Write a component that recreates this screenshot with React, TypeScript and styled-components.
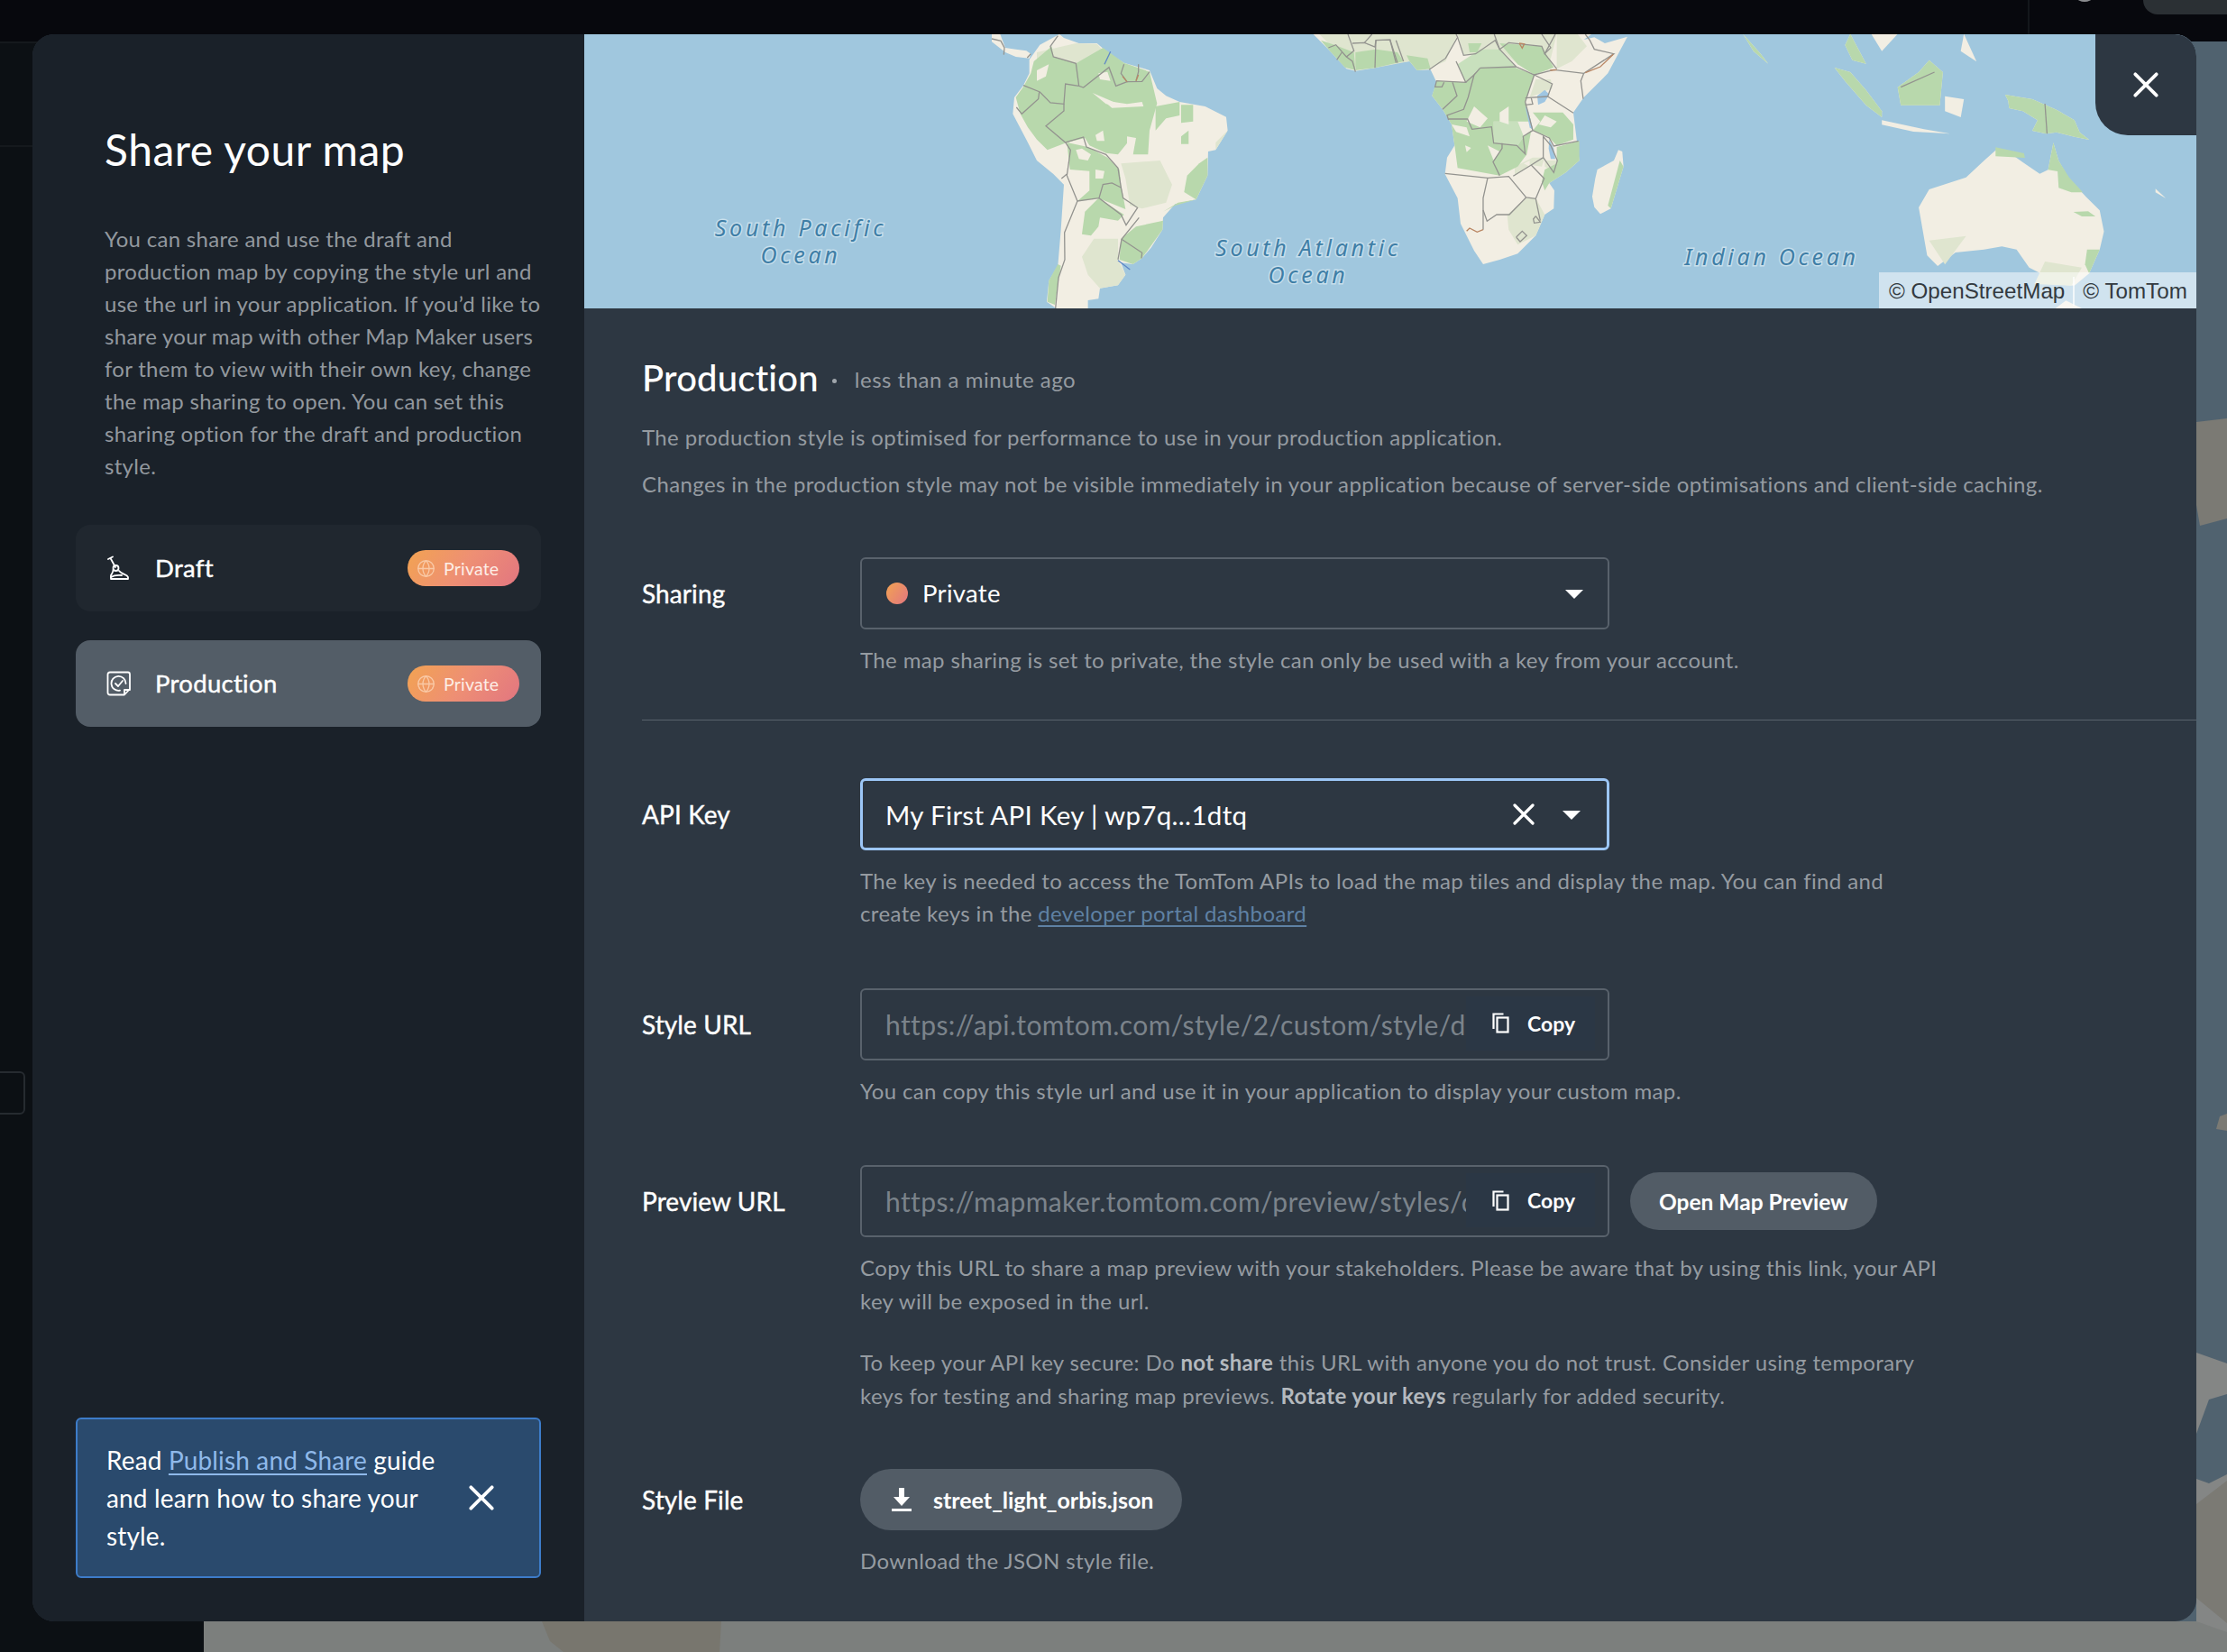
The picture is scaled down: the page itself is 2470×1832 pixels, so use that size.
import React from 'react';
import styled, { createGlobalStyle } from 'styled-components';
import { Globe } from 'lucide-react';

const GlobalStyle = createGlobalStyle`
  html, body {
    margin: 0;
    padding: 0;
    background: #0c1014;
    font-family: 'Lato', 'Noto Sans', sans-serif;
  }
  * { box-sizing: border-box; }
`;

const Page = styled.div`
  position: relative;
  width: 2470px;
  height: 1832px;
  overflow: hidden;
  display: flex;
  flex-direction: column;
`;

// dimmed app behind the modal
const TopBar = styled.div`
  height: 46px;
  background: #07080d;
  position: relative;
  flex: none;
`;

const TopDivider = styled.div`
  position: absolute;
  left: 2249px;
  top: 0;
  width: 2px;
  height: 44px;
  background: #14171b;
`;

const TopDot = styled.div`
  position: absolute;
  left: 2304px;
  top: -6px;
  width: 16px;
  height: 8px;
  border-radius: 50%;
  background: #8b8d90;
`;

const TopPill = styled.div`
  position: absolute;
  left: 2377px;
  top: 0;
  right: 0;
  height: 16px;
  background: #2b3034;
  border-bottom-left-radius: 18px;
`;

const BackRow = styled.div`
  flex: 1;
  display: flex;
  min-height: 0;
`;

const BackRail = styled.div`
  width: 226px;
  position: relative;
  background: #0c1014;
  border-top: 2px solid #15191d;
`;

const RailLine = styled.div`
  position: absolute;
  left: 0;
  right: 0;
  top: 113px;
  height: 2px;
  background: #15191d;
`;

const RailBox = styled.div`
  position: absolute;
  left: -6px;
  top: 1140px;
  width: 34px;
  height: 48px;
  border: 2px solid #262b30;
  border-radius: 6px;
`;

const BackMap = styled.svg`
  flex: 1;
  display: block;
  background: #50626f;
`;

const Modal = styled.div`
  position: absolute;
  left: 36px;
  top: 38px;
  width: 2400px;
  height: 1760px;
  display: flex;
  border-radius: 24px;
  overflow: hidden;
  background: #2d3742;
`;

const Sidebar = styled.aside`
  width: 612px;
  flex: none;
  background: #1a2129;
  padding: 100px 48px 48px;
  display: flex;
  flex-direction: column;
`;

const SideTitle = styled.h1`
  margin: 0 0 53px 32px;
  font-size: 48px;
  line-height: 56px;
  font-weight: 400;
  color: #ffffff;
  letter-spacing: 0.5px;
`;

const SideText = styled.p`
  margin: 0 0 47px 32px;
  font-size: 24px;
  line-height: 36px;
  color: #92989e;
  white-space: nowrap;
  letter-spacing: 0.3px;
`;

const Stages = styled.div`
  display: flex;
  flex-direction: column;
  gap: 32px;
`;

const StageCard = styled.div<{ $active?: boolean }>`
  height: 96px;
  border-radius: 16px;
  background: ${(p) => (p.$active ? '#535d67' : '#20272f')};
  display: flex;
  align-items: center;
  padding: 0 24px 0 34px;
`;

const StageIcon = styled.svg`
  width: 28px;
  height: 28px;
  flex: none;
  fill: none;
  stroke: #ffffff;
  stroke-width: 1.8;
  stroke-linecap: round;
  stroke-linejoin: round;
`;

const StageName = styled.span`
  margin: -2px 0 0 26px;
  flex: 1;
  font-size: 27.5px;
  color: #ffffff;
  letter-spacing: 0.3px;
  -webkit-text-stroke: 0.4px #ffffff;
`;

const Badge = styled.span`
  width: 124px;
  height: 40px;
  border-radius: 20px;
  background: linear-gradient(125deg, #f2a352 0%, #ee8f74 50%, #e27680 100%);
  display: flex;
  align-items: center;
  padding-left: 10px;
  gap: 9px;
  font-size: 19.5px;
  color: #fdeee6;
  letter-spacing: 0.2px;
  svg {
    width: 21px;
    height: 21px;
    color: #f9c9a6;
    flex: none;
  }
`;

const InfoBox = styled.div`
  margin-top: auto;
  height: 178px;
  background: #2a4a6d;
  border: 2px solid #3d7cc9;
  border-radius: 6px;
  display: flex;
  align-items: center;
  padding: 0 50px 0 32px;
`;

const InfoText = styled.p`
  margin: 0;
  flex: 1;
  font-size: 28px;
  line-height: 42px;
  color: #ffffff;
  white-space: nowrap;
  letter-spacing: 0.15px;
`;

const InfoLink = styled.a`
  color: #8fb9ea;
  text-decoration: underline;
  text-underline-offset: 4px;
`;

const CloseMark = styled.svg<{ $size: number }>`
  width: ${(p) => p.$size}px;
  height: ${(p) => p.$size}px;
  flex: none;
  stroke: #ffffff;
  stroke-width: 3.2;
  stroke-linecap: round;
  fill: none;
`;

const Main = styled.main`
  flex: 1;
  min-width: 0;
  display: flex;
  flex-direction: column;
`;

const MapBox = styled.div`
  position: relative;
  height: 304px;
  flex: none;
  overflow: hidden;
  background: #a0c7de;
`;

const MapSvg = styled.svg`
  display: block;
  width: 1788px;
  height: 304px;
  polyline {
    fill: none;
    stroke-width: 1.3px;
    vector-effect: non-scaling-stroke;
  }
`;

const MapLabel = styled.text`
  font-family: 'Noto Sans', sans-serif;
  font-style: italic;
  font-size: 25px;
  letter-spacing: 3.7px;
  text-anchor: middle;
  fill: #3f7ea6;
  stroke: #c7dfec;
  stroke-width: 3px;
  paint-order: stroke;
`;

const Attribution = styled.div`
  position: absolute;
  right: 0;
  bottom: 0;
  height: 40px;
  width: 352px;
  background: rgba(255, 255, 255, 0.5);
  display: flex;
  align-items: center;
  gap: 9px;
  padding: 1px 0 0 11px;
  font-family: 'Liberation Sans', sans-serif;
  font-size: 24.2px;
  color: #333a40;
  white-space: nowrap;
`;

const AttributionPart = styled.span`
  border-left: 2px solid rgba(255, 255, 255, 0.7);
  padding-left: 9px;
  line-height: 32px;
`;

const CloseTab = styled.button`
  position: absolute;
  top: 0;
  right: 0;
  width: 112px;
  height: 112px;
  border: 0;
  padding: 0;
  background: #2d3742;
  border-bottom-left-radius: 36px;
  display: flex;
  align-items: center;
  justify-content: center;
`;

const Content = styled.div`
  flex: 1;
  padding: 53px 0 0 64px;
`;

const Heading = styled.div`
  display: flex;
  align-items: center;
  height: 48px;
  margin-bottom: 24px;
`;

const HeadingTitle = styled.h2`
  margin: 0;
  font-size: 40px;
  font-weight: 500;
  color: #ffffff;
  letter-spacing: 0.2px;
`;

const HeadingDot = styled.span`
  width: 5px;
  height: 5px;
  margin: 6px 20px 0 15px;
  border-radius: 50%;
  background: #a0a6ac;
`;

const HeadingTime = styled.span`
  font-size: 24px;
  margin-top: 3px;
  color: #959ba1;
  letter-spacing: 0.5px;
`;

const Lead = styled.p<{ $last?: boolean }>`
  margin: 0 0 ${(p) => (p.$last ? 63 : 16)}px;
  font-size: 24px;
  line-height: 36px;
  color: #959ba1;
  letter-spacing: 0.37px;
  white-space: nowrap;
`;

const Section = styled.section<{ $gap?: number }>`
  display: grid;
  grid-template-columns: 242px 1fr;
  row-gap: 16px;
  align-items: center;
  margin-bottom: ${(p) => p.$gap ?? 64}px;
`;

const FieldLabel = styled.label`
  font-size: 28px;
  color: #ffffff;
  letter-spacing: 0.1px;
  -webkit-text-stroke: 0.4px #ffffff;
`;

const FieldRow = styled.div`
  display: flex;
  align-items: center;
  gap: 23px;
`;

const Box = styled.div<{ $focus?: boolean }>`
  width: 831px;
  height: 80px;
  flex: none;
  border: ${(p) => (p.$focus ? '3px solid #9cc6f6' : '2px solid #59626c')};
  border-radius: 6px;
  display: flex;
  align-items: center;
  padding-left: ${(p) => (p.$focus ? 25 : 26)}px;
  overflow: hidden;
  position: relative;
`;

const StatusDot = styled.span`
  width: 24px;
  height: 24px;
  border-radius: 50%;
  background: linear-gradient(125deg, #f2a352, #e27680);
  margin: 0 16px 0 1px;
  flex: none;
`;

const BoxValue = styled.span<{ $large?: boolean }>`
  flex: 1;
  font-size: ${(p) => (p.$large ? 29.5 : 27.5)}px;
  margin-top: ${(p) => (p.$large ? 2 : -2)}px;
  color: #ffffff;
  white-space: nowrap;
  letter-spacing: 0.32px;
`;

const Caret = styled.span<{ $right: number }>`
  width: 0;
  height: 0;
  margin-right: ${(p) => p.$right}px;
  margin-top: 2px;
  flex: none;
  border-left: 10px solid transparent;
  border-right: 10px solid transparent;
  border-top: 10px solid #ffffff;
`;

const ClearBtn = styled.span`
  display: flex;
  margin-right: 31px;
`;

const UrlText = styled.span`
  flex: 1;
  min-width: 0;
  overflow: hidden;
  font-size: 30px;
  color: #7b838b;
  white-space: nowrap;
  letter-spacing: 0.4px;
`;

const CopyBtn = styled.span`
  width: 143px;
  height: 60px;
  margin-right: 14px;
  margin-top: -2px;
  flex: none;
  display: flex;
  align-items: center;
  gap: 19px;
  padding-left: 29px;
  background: #2b3745;
  font-size: 23px;
  font-weight: 700;
  color: #ffffff;
`;

const CopyIcon = styled.svg`
  width: 20px;
  height: 23px;
  flex: none;
  fill: none;
  stroke: #ffffff;
  stroke-width: 2.2;
`;

const Help = styled.p<{ $tight?: boolean }>`
  grid-column: 2;
  margin: 0 0 ${(p) => (p.$tight ? 32 : 0)}px;
  font-size: 24px;
  line-height: 36.5px;
  color: #959ba1;
  white-space: nowrap;
  letter-spacing: 0.37px;
  b {
    color: #b4b9be;
    font-weight: 700;
  }
`;

const HelpLink = styled.a`
  color: #5f81a4;
  text-decoration: underline;
  text-underline-offset: 4px;
`;

const HelpStack = styled.div`
  grid-column: 2;
  display: flex;
  flex-direction: column;
`;

const Divider = styled.hr`
  margin: 47px 0 64px;
  border: 0;
  height: 1px;
  background: #59626c;
`;

const PillButton = styled.button`
  height: 64px;
  padding: 0 32px;
  border: 0;
  border-radius: 32px;
  background: #525c66;
  font-family: inherit;
  font-size: 24.5px;
  font-weight: 700;
  color: #ffffff;
  white-space: nowrap;
`;

const FileButton = styled(PillButton)`
  height: 68px;
  width: 357px;
  border-radius: 34px;
  padding: 0 0 0 35px;
  font-size: 25px;
  display: flex;
  align-items: center;
  gap: 24px;
`;

const DownloadIcon = styled.svg`
  width: 22px;
  height: 26px;
  flex: none;
  fill: #ffffff;
`;

const LAND = '#f2eee3';
const MID = '#dfe5cf';
const FOREST = '#b8d8ac';
const LIGHT_FOREST = '#c8e0bd';
const BORDER = '#93938f';
const ORANGE = '#b98663';
const LAKE = '#9fc6e2';

const Shapes = ({ fill, items }: { fill: string; items: string[] }) => (
  <>
    {items.map((p, i) => (
      <polygon key={i} points={p} fill={fill} />
    ))}
  </>
);

const Lines = ({ color, items }: { color: string; items: string[] }) => (
  <>
    {items.map((p, i) => (
      <polyline key={i} points={p} stroke={color} />
    ))}
  </>
);

// South America, in the 3x crop of the reference
const SouthAmerica = () => (
  <g transform="translate(452 0) scale(0.3333)">
    <Shapes
      fill={LAND}
      items={[
        '0,0 28,0 45,45 80,50 115,55 130,65 125,80 80,75 45,60 0,25',
        '125,85 160,35 215,5 225,0 240,12 290,30 350,30 385,60 440,95 525,120 550,180 580,205 625,225 710,240 780,275 785,320 745,385 720,390 718,470 680,550 610,565 570,610 568,650 530,710 500,745 470,765 430,760 445,800 420,835 360,845 355,880 320,885 320,912 215,912 183,890 190,820 220,770 230,650 240,500 205,465 150,420 120,360 70,265 75,210 105,170 125,130',
      ]}
    />
    <Shapes
      fill={MID}
      items={[
        '430,430 560,420 600,500 580,560 500,580 460,570 445,480',
        '300,740 340,680 420,680 420,750 445,800 420,835 360,845 320,800',
        '745,360 785,320 745,385',
        '150,60 280,30 350,32 375,60 280,95 200,70 150,130',
      ]}
    />
    <Shapes
      fill={FOREST}
      items={[
        '105,175 130,130 140,90 200,40 205,75 280,97 370,45 440,95 525,125 550,230 525,320 520,400 470,400 460,350 420,400 380,395 325,370 310,345 250,360 185,385 150,350 120,310 95,265 80,210',
        '250,360 320,375 385,410 425,450 430,500 445,582 355,545 285,555 325,520 325,455 260,450',
        '310,590 355,545 440,600 420,620 360,610 355,640 330,670 300,665',
        '430,680 480,640 570,620 568,650 500,745 470,765 425,750',
        '630,340 655,320 655,365 630,365',
        '545,240 625,225 625,270 580,280 545,320',
        '630,235 670,235 670,290 630,295',
        '690,430 718,410 718,470 680,550 640,525 650,470',
        '570,590 620,560 680,550 610,570',
        '190,820 220,765 230,770 210,900 185,890',
      ]}
    />
    <Shapes
      fill={LAND}
      items={[
        '335,195 440,240 380,232',
        '370,220 450,232 500,225 505,240 400,245',
        '345,335 370,320 375,355 350,355',
        '450,340 480,345 470,400 450,395',
        '280,385 300,380 330,400 320,420 290,415',
        '150,120 190,100 180,140 150,155',
        '345,450 375,455 370,480 345,480',
        '355,130 385,125 395,155 360,150',
      ]}
    />
    <Lines
      color={BORDER}
      items={[
        '220,5 195,40 205,75 280,97 290,172 305,177 390,110 413,172 450,158 430,130 440,100',
        '450,158 500,157 525,125',
        '480,155 488,125 488,100',
        '105,170 160,192 195,228 240,232 245,165 290,172',
        '240,232 240,255 180,305 245,360 305,342 315,375 380,400 420,445 430,510 437,545 485,577 447,635 430,600 357,545 285,555 250,470 262,385 245,360',
        '82,243 100,265 155,215 158,192',
        '357,545 370,500 400,495 430,510',
        '285,555 242,660 243,750 222,810 212,912',
        '250,465 232,480',
        '490,610 432,682 420,750',
        '432,682 500,727 498,745',
        '0,15 30,22 42,45 40,68',
        '118,78 130,65',
      ]}
    />
    <Lines color="#5d86c7" items={['395,58 375,100', '420,752 460,783']} />
    <Lines color={ORANGE} items={['435,140 450,158', '480,155 488,135']} />
  </g>
);

const Africa = () => (
  <g transform="translate(802 0) scale(0.3333)">
    <Shapes
      fill={LAND}
      items={[
        '20,0 70,50 130,115 160,122 225,112 290,95 340,90 365,120 410,118 430,160 415,205 450,250 480,300 490,370 465,410 458,465 500,545 510,630 555,720 585,765 640,750 700,730 760,670 790,600 820,580 822,520 805,495 860,460 905,420 885,260 920,210 1000,130 1065,8 990,30 955,10 920,18 945,0',
        '1035,385 1048,390 1052,440 1010,580 975,598 955,575 948,540 958,480 965,450 1020,420',
      ]}
    />
    <Shapes
      fill={MID}
      items={[
        '130,0 500,0 460,90 400,115 340,90 225,112 170,115 100,60 40,0',
        '500,0 830,0 800,120 700,100 640,50 520,70',
        '830,0 900,0 930,40 880,90 830,115',
        '690,440 750,410 790,410 780,440 745,435 690,470',
        '665,600 730,545 760,545 790,600 760,670 700,700 670,650',
        '760,150 810,150 815,180 740,210',
        '790,420 830,420 820,460 790,440',
      ]}
    />
    <Shapes
      fill={LIGHT_FOREST}
      items={['500,100 575,50 640,50 695,110 575,112 525,160', '620,290 700,290 720,340 700,370 620,360']}
    />
    <Shapes
      fill={FOREST}
      items={[
        '45,20 90,35 155,60 160,120 125,110 70,50',
        '160,60 230,50 300,60 320,90 225,112 160,120',
        '330,70 400,80 410,115 365,120 340,90',
        '415,205 430,155 525,160 575,112 690,110 755,135 725,225 745,290 620,290 620,360 700,370 720,340 745,320 730,400 700,440 640,470 500,445 490,370 480,300 450,250',
        '640,30 780,40 820,110 755,135 700,100',
        '750,260 850,260 885,300 885,350 830,370 800,340 750,320 775,290',
        '830,375 905,355 905,420 860,460 805,495 790,520 780,490 790,450 830,430',
        '535,30 580,30 565,60 540,60',
        '1040,420 1052,440 1010,580 1000,570',
      ]}
    />
    <Shapes
      fill={LAND}
      items={[
        '480,300 530,310 540,340 495,325',
        '525,370 545,378 530,392',
        '555,240 600,280 575,310 530,290',
        '640,260 670,240 670,300 640,290',
        '600,370 640,390 620,420',
        '790,270 830,290 810,310 770,300',
        '720,430 740,420 740,440',
      ]}
    />
    <Shapes
      fill={LAKE}
      items={[
        '765,205 790,185 805,200 790,225 768,235',
        '725,240 735,255 752,320 740,310',
        '805,350 820,380 825,415 810,415 803,380',
      ]}
    />
    <Lines
      color={BORDER}
      items={[
        '70,45 95,35 130,75 155,55 135,0',
        '98,85 115,60',
        '130,75 150,90 160,125',
        '150,30 190,28 225,42 228,20 275,18 295,95',
        '275,18 300,95',
        '228,20 225,112',
        '190,28 215,0',
        '295,20 320,90',
        '405,118 460,80 500,10 495,0',
        '500,10 520,70 560,65 625,20 640,50 695,108 755,135 820,118 920,130 1020,65 955,50 940,20 925,0',
        '622,0 640,50 670,28 780,40 790,65 825,0',
        '780,0 810,45 790,65 830,115',
        '495,90 527,160 430,155 425,175 448,175 455,160',
        '483,160 498,205 450,250',
        '527,160 555,135 535,210 520,250 465,270 470,285',
        '575,112 555,135',
        '575,112 695,108',
        '755,135 725,225 750,320 805,345 820,372 902,355',
        '755,135 815,165 800,207 885,262',
        '800,207 725,212',
        '725,235 750,232 745,212',
        '920,130 910,155 918,215',
        '470,282 533,282 548,316 613,308 620,362 697,370 725,398 718,340 750,320',
        '648,362 648,380 618,425 640,470',
        '458,463 600,478 670,473 728,543 760,547 788,480 745,435 685,472',
        '600,478 585,545 585,650',
        '585,585 598,622 630,600 672,600 728,543',
        '760,547 775,620',
        '760,605 775,625 755,628 752,615 760,605',
        '695,675 715,655 730,670 708,690 695,675',
        '745,435 785,410 820,460 832,420 810,370 785,340 785,410',
      ]}
    />
    <Lines
      color={ORANGE}
      items={['925,128 975,108 1018,67', '705,30 722,32 715,46 705,30', '808,120 830,118', '585,650 565,658 540,645 530,655']}
    />
  </g>
);

// rest of the map, in a 1568x1080 stretched crop
const toMap = (pts: number[][]) =>
  pts.map(([x, y]) => `${(x * 1.1671 - 8).toFixed(1)},${(y / 3 - 38).toFixed(1)}`).join(' ');

const sumatra = [[1195,225],[1210,240],[1225,300],[1240,370],[1240,390],[1225,350],[1205,270]];
const borneo = [[1285,200],[1298,240],[1295,350],[1258,350],[1255,290],[1275,240]];
const newGuinea = [[1357,315],[1366,320],[1383,330],[1406,365],[1423,400],[1428,440],[1437,465],[1423,455],[1406,440],[1396,445],[1383,435],[1388,400],[1374,370],[1361,360],[1360,335]];
const burma = [[1108,113],[1125,180],[1132,212],[1118,170]];
const siam = [[1210,113],[1225,212],[1212,200],[1205,150]];

const asiaLand: number[][][] = [
  [[1275,690],[1285,630],[1320,590],[1337,535],[1348,500],[1358,500],[1374,540],[1390,578],[1398,565],[1403,475],[1408,535],[1417,590],[1434,655],[1447,700],[1451,770],[1447,830],[1437,910],[1423,950],[1397,945],[1391,910],[1380,890],[1368,830],[1354,820],[1337,830],[1310,840],[1293,885],[1283,850]],
  sumatra,
  [[1240,400],[1280,430],[1305,445],[1270,438],[1240,415]],
  borneo,
  [[1300,320],[1318,330],[1315,390],[1300,370]],
  burma,
  siam,
  [[1230,113],[1255,113],[1240,170]],
  [[1318,113],[1330,205],[1315,170]],
  newGuinea,
  [[1500,628],[1510,660],[1500,640]],
  [[1415,1000],[1430,1026],[1405,1026]],
];

const asiaMid: number[][][] = [
  [[1285,800],[1320,785],[1300,880]],
  [[1395,870],[1430,890],[1420,950],[1385,945]],
];

const asiaForest: number[][][] = [
  [[1348,490],[1375,510],[1376,525],[1348,520]],
  [[1403,475],[1408,535],[1418,590],[1431,640],[1420,640],[1408,625],[1407,570],[1398,565]],
  [[1435,830],[1447,830],[1437,910],[1433,880]],
  [[1422,705],[1436,703],[1443,720],[1430,720]],
  sumatra,
  borneo,
  newGuinea,
  burma,
  siam,
];

const MapDrawing = () => (
  <MapSvg viewBox="0 0 1788 304">
    <SouthAmerica />
    <Africa />
    <Shapes fill={LAND} items={asiaLand.map(toMap)} />
    <Shapes fill={MID} items={asiaMid.map(toMap)} />
    <Shapes fill={FOREST} items={asiaForest.map(toMap)} />
    <Lines color={BORDER} items={[toMap([[1395,345],[1397,445]]), toMap([[1258,290],[1290,240]])]} />
    <MapLabel x="240" y="224">South Pacific</MapLabel>
    <MapLabel x="240" y="254">Ocean</MapLabel>
    <MapLabel x="803" y="246">South Atlantic</MapLabel>
    <MapLabel x="803" y="276">Ocean</MapLabel>
    <MapLabel x="1317" y="256">Indian Ocean</MapLabel>
  </MapSvg>
);

const X = ({ size }: { size: number }) => (
  <CloseMark $size={size} viewBox="0 0 24 24">
    <path d="M2 2 L22 22 M22 2 L2 22" />
  </CloseMark>
);

const Copy = () => (
  <CopyBtn>
    <CopyIcon viewBox="0 0 20 23">
      <path d="M1.5 18V1.5h11" />
      <rect x="5.5" y="5.5" width="12" height="16" />
    </CopyIcon>
    Copy
  </CopyBtn>
);

const Stage = ({ name, active, icon }: { name: string; active?: boolean; icon: React.ReactNode }) => (
  <StageCard $active={active}>
    <StageIcon viewBox="0 0 28 28">{icon}</StageIcon>
    <StageName>{name}</StageName>
    <Badge>
      <Globe strokeWidth={1.5} />
      Private
    </Badge>
  </StageCard>
);

const App: React.FC = () => {
  return (
    <Page>
      <GlobalStyle />
      <TopBar>
        <TopDivider />
        <TopDot />
        <TopPill />
      </TopBar>
      <BackRow>
        <BackRail>
          <RailLine />
          <RailBox />
        </BackRail>
        <BackMap viewBox="226 46 2244 1786" preserveAspectRatio="none">
          <polygon points="2436,468 2470,464 2470,575 2440,583 2436,560" fill="#7b7a74" />
          <polygon points="2458,1252 2462,1238 2470,1235 2470,1254" fill="#7b7a74" />
          <polygon points="2436,1500 2470,1512 2470,1832 226,1832 226,1798 2436,1798" fill="#848685" />
          <polygon points="2436,1590 2450,1552 2470,1546 2470,1635 2450,1645 2436,1640" fill="#50626f" />
          <polygon points="2436,1668 2470,1642 2470,1800 2436,1772" fill="#7b7a74" />
          <polygon points="226,1798 2436,1798 2470,1810 2470,1832 226,1832" fill="#7c7f7d" />
          <polygon points="601,1798 800,1798 798,1832 625,1832 610,1820" fill="#78766e" />
        </BackMap>
      </BackRow>

      <Modal>
        <Sidebar>
          <SideTitle>Share your map</SideTitle>
          <SideText>
            You can share and use the draft and
            <br />
            production map by copying the style url and
            <br />
            use the url in your application. If you’d like to
            <br />
            share your map with other Map Maker users
            <br />
            for them to view with their own key, change
            <br />
            the map sharing to open. You can set this
            <br />
            sharing option for the draft and production
            <br />
            style.
          </SideText>
          <Stages>
            <Stage
              name="Draft"
              icon={
                <>
                  <path d="M2 4 L7 1.5 M4.5 3 L10 13" />
                  <circle cx="10.5" cy="14" r="3" />
                  <path d="M7.5 16 C7.5 19 6 20 5 22 V26 H24 V24 C23 21 17 21 14 17" />
                  <path d="M5 24 C10 21 14 22 17 22" />
                </>
              }
            />
            <Stage
              name="Production"
              active
              icon={
                <>
                  <path d="M4 1.5 H24 Q26 1.5 26 4 V20 L20 26.5 H4 Q1.5 26.5 1.5 24 V4 Q1.5 1.5 4 1.5 Z" />
                  <path d="M20 26 V21 H26" />
                  <path d="M21.5 14 A8 8 0 1 0 15 21.7" />
                  <path d="M10 14 L13 17 L18 11" />
                </>
              }
            />
          </Stages>
          <InfoBox>
            <InfoText>
              Read <InfoLink>Publish and Share</InfoLink> guide
              <br />
              and learn how to share your
              <br />
              style.
            </InfoText>
            <X size={28} />
          </InfoBox>
        </Sidebar>

        <Main>
          <MapBox>
            <MapDrawing />
            <Attribution>
              <span>© OpenStreetMap</span>
              <AttributionPart>© TomTom</AttributionPart>
            </Attribution>
            <CloseTab>
              <X size={28} />
            </CloseTab>
          </MapBox>

          <Content>
            <Heading>
              <HeadingTitle>Production</HeadingTitle>
              <HeadingDot />
              <HeadingTime>less than a minute ago</HeadingTime>
            </Heading>
            <Lead>The production style is optimised for performance to use in your production application.</Lead>
            <Lead $last>
              Changes in the production style may not be visible immediately in your application because of server-side
              optimisations and client-side caching.
            </Lead>

            <Section $gap={0}>
              <FieldLabel>Sharing</FieldLabel>
              <Box>
                <StatusDot />
                <BoxValue>Private</BoxValue>
                <Caret $right={27} />
              </Box>
              <Help>The map sharing is set to private, the style can only be used with a key from your account.</Help>
            </Section>

            <Divider />

            <Section>
              <FieldLabel>API Key</FieldLabel>
              <Box $focus>
                <BoxValue $large>My First API Key | wp7q...1dtq</BoxValue>
                <ClearBtn>
                  <X size={24} />
                </ClearBtn>
                <Caret $right={29} />
              </Box>
              <Help>
                The key is needed to access the TomTom APIs to load the map tiles and display the map. You can find and
                <br />
                create keys in the <HelpLink>developer portal dashboard</HelpLink>
              </Help>
            </Section>

            <Section>
              <FieldLabel>Style URL</FieldLabel>
              <Box>
                <UrlText>https://api.tomtom.com/style/2/custom/style/dG9</UrlText>
                <Copy />
              </Box>
              <Help>You can copy this style url and use it in your application to display your custom map.</Help>
            </Section>

            <Section $gap={63}>
              <FieldLabel>Preview URL</FieldLabel>
              <FieldRow>
                <Box>
                  <UrlText>https://mapmaker.tomtom.com/preview/styles/dG9</UrlText>
                  <Copy />
                </Box>
                <PillButton>Open Map Preview</PillButton>
              </FieldRow>
              <HelpStack>
                <Help $tight>
                  Copy this URL to share a map preview with your stakeholders. Please be aware that by using this link, your API
                  <br />
                  key will be exposed in the url.
                </Help>
                <Help>
                  To keep your API key secure: Do <b>not share</b> this URL with anyone you do not trust. Consider using temporary
                  <br />
                  keys for testing and sharing map previews. <b>Rotate your keys</b> regularly for added security.
                </Help>
              </HelpStack>
            </Section>

            <Section $gap={0}>
              <FieldLabel>Style File</FieldLabel>
              <FileButton>
                <DownloadIcon viewBox="0 0 22 26">
                  <path d="M8 0h6v10h6l-9 10-9-10h6z" />
                  <rect x="0" y="23" width="22" height="3" />
                </DownloadIcon>
                street_light_orbis.json
              </FileButton>
              <Help>Download the JSON style file.</Help>
            </Section>
          </Content>
        </Main>
      </Modal>
    </Page>
  );
};

export default App;
